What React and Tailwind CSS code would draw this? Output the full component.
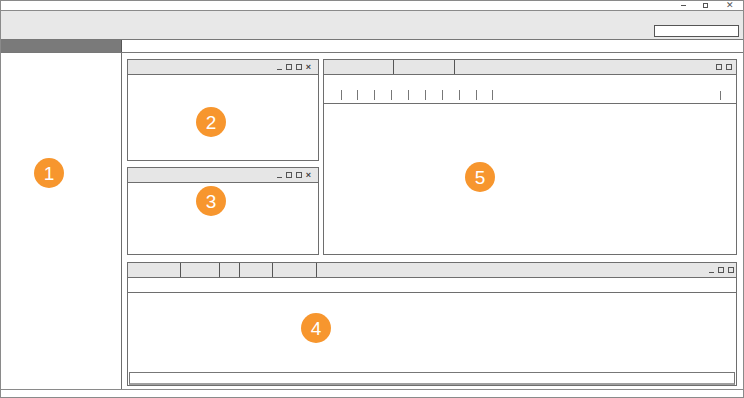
const line = 'border-[#6e6e6e]';

function Badge({ n, className = '' }) {
  return (
    <div
      className={`flex h-[30px] w-[30px] shrink-0 items-center justify-center rounded-full bg-[#f7962e] text-[19px] leading-none text-white ${className}`}
    >
      {n}
    </div>
  );
}

function Box() {
  return <div className="h-[6px] w-[6px] border border-[#555]" />;
}

function Dash() {
  return <div className="mt-[5px] h-px w-[5px] bg-[#555]" />;
}

function Cross() {
  return <span className="text-[9px] font-bold leading-none text-[#444]">×</span>;
}

function SmallPanel({ height, badge }) {
  return (
    <div className={`flex flex-col border ${line} bg-white ${height}`}>
      <div className={`flex h-[15px] shrink-0 items-center justify-end gap-[4px] border-b ${line} bg-[#e6e6e6] pr-[7px]`}>
        <Dash />
        <Box />
        <Box />
        <Cross />
      </div>
      <div className="flex-1">
        <Badge n={badge.n} className={badge.cls} />
      </div>
    </div>
  );
}

const ticks = ['ml-[17px]', 'ml-[15px]', 'ml-[16px]', 'ml-[16px]', 'ml-[16px]', 'ml-[16px]', 'ml-[16px]', 'ml-[16px]', 'ml-[16px]', 'ml-[15px]'];

export default function App() {
  return (
    <div className="flex h-[398px] w-[744px] flex-col overflow-hidden border border-[#8a8a8a] bg-white font-['Liberation_Sans',Arial,sans-serif]">
      {/* window title bar */}
      <div className="flex h-[10px] shrink-0 items-center justify-end border-b border-[#8a8a8a] pr-[9px] text-[#555]">
        <div className="mr-[17px] h-px w-[5px] bg-[#555]" />
        <div className="mr-[18px] h-[5px] w-[5px] border border-[#555]" />
        <span className="text-[9px] leading-none">✕</span>
      </div>

      {/* toolbar */}
      <div className="flex h-[29px] shrink-0 items-end justify-end border-b border-[#777] bg-[#e8e8e8] pb-[2px] pr-[4px]">
        <div className="h-[12px] w-[85px] border border-[#555] bg-white" />
      </div>

      {/* tab strip */}
      <div className="flex h-[13px] shrink-0 border-b border-[#777]">
        <div className="w-[121px] border-r border-[#555] bg-[#7a7a7a]" />
        <div className="flex-1 bg-white" />
      </div>

      {/* main */}
      <div className="flex min-h-0 flex-1">
        <aside className="w-[121px] shrink-0 border-r border-[#6e6e6e]">
          <Badge n="1" className="ml-[33px] mt-[105px]" />
        </aside>

        <div className="flex flex-1 flex-col gap-[7px] pb-[3px] pl-[5px] pr-[6px] pt-[6px]">
          <div className="flex h-[196px] gap-[4px]">
            <div className="flex w-[192px] shrink-0 flex-col gap-[6px]">
              <SmallPanel height="h-[102px]" badge={{ n: '2', cls: 'ml-[68px] mt-[32px]' }} />
              <SmallPanel height="flex-1" badge={{ n: '3', cls: 'ml-[68px] mt-[3px]' }} />
            </div>

            {/* panel 5 */}
            <div className={`flex flex-1 flex-col border ${line} bg-white`}>
              <div className={`flex h-[15px] shrink-0 items-stretch border-b ${line} bg-[#e6e6e6]`}>
                <div className="w-[70px] border-r border-[#555]" />
                <div className="w-[61px] border-r border-[#555]" />
                <div className="flex flex-1 items-center justify-end gap-[4px] pr-[4px]">
                  <Box />
                  <Box />
                </div>
              </div>
              <div className={`flex h-[29px] shrink-0 items-end border-b ${line} pb-[3px]`}>
                {ticks.map((c, i) => (
                  <div key={i} className={`h-[10px] w-px bg-[#777] ${c}`} />
                ))}
                <div className="ml-auto mr-[15px] h-[9px] w-px bg-[#777]" />
              </div>
              <div className="flex-1">
                <Badge n="5" className="ml-[141px] mt-[58px]" />
              </div>
            </div>
          </div>

          {/* panel 4 */}
          <div className={`flex h-[124px] flex-col border ${line} bg-white`}>
            <div className={`flex h-[15px] shrink-0 items-stretch border-b ${line} bg-[#e6e6e6]`}>
              <div className="w-[53px] border-r border-[#555]" />
              <div className="w-[39px] border-r border-[#555]" />
              <div className="w-[20px] border-r border-[#555]" />
              <div className="w-[33px] border-r border-[#555]" />
              <div className="w-[44px] border-r border-[#555]" />
              <div className="flex flex-1 items-center justify-end gap-[4px] pr-[2px]">
                <Dash />
                <Box />
                <Box />
              </div>
            </div>
            <div className={`h-[15px] shrink-0 border-b ${line}`} />
            <div className="flex flex-1 flex-col">
              <Badge n="4" className="ml-[173px] mt-[20px]" />
              <div className="mx-px mt-auto h-[13px] border border-b-2 border-[#777] border-b-[#a0a0a0] bg-white" />
            </div>
          </div>
        </div>
      </div>

      {/* status bar */}
      <div className="h-[8px] shrink-0 border-t border-[#8a8a8a]" />
    </div>
  );
}
